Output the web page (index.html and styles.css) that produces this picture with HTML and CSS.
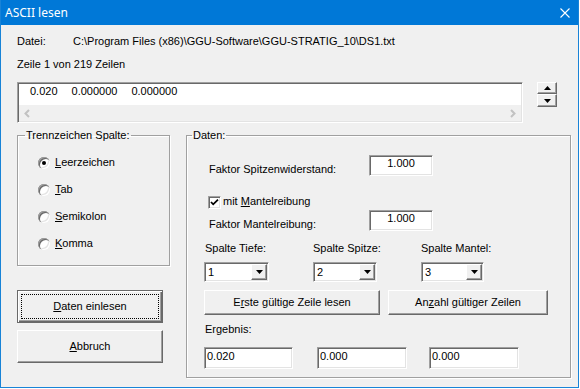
FILE: index.html
```html
<!DOCTYPE html>
<html lang="de">
<head>
  <meta charset="UTF-8">
  <title>ASCII lesen</title>
  <link rel="stylesheet" href="styles.css">
</head>
<body>
  <div class="window">
    <div class="titlebar">
      <span class="title">ASCII lesen</span>
      <svg class="close" width="10" height="10" viewBox="0 0 10 10">
        <path d="M0.5 0.5 L9.5 9.5 M9.5 0.5 L0.5 9.5" stroke="#fff" stroke-width="1.1" fill="none"/>
      </svg>
    </div>

    <div class="client">
      <div class="file-row">
        <span class="file-label">Datei:</span>
        <span>C:\Program Files (x86)\GGU-Software\GGU-STRATIG_10\DS1.txt</span>
      </div>
      <div class="line-info">Zeile 1 von 219 Zeilen</div>

      <div class="preview">
        <div class="listbox">
          <div class="list-line">
            <span>0.020</span>
            <span>0.000000</span>
            <span>0.000000</span>
          </div>
          <div class="hscroll">
            <span class="arrow-cell">
              <svg width="17" height="17" viewBox="0 0 17 17"><polyline points="10,5 6.5,8.5 10,12" fill="none" stroke="#c2c2c2" stroke-width="2"/></svg>
            </span>
            <span class="arrow-cell">
              <svg width="17" height="17" viewBox="0 0 17 17"><polyline points="7,5 10.5,8.5 7,12" fill="none" stroke="#c2c2c2" stroke-width="2"/></svg>
            </span>
          </div>
        </div>
        <div class="spin">
          <button class="raised spin-btn spin-up" type="button">
            <svg width="7" height="4" viewBox="0 0 7 4"><polygon points="0,4 7,4 3.5,0" fill="#000"/></svg>
          </button>
          <button class="raised spin-btn spin-down" type="button">
            <svg width="7" height="4" viewBox="0 0 7 4"><polygon points="0,0 7,0 3.5,4" fill="#000"/></svg>
          </button>
        </div>
      </div>

      <div class="lower">
        <div class="left-col">
          <fieldset class="group sep-group">
            <legend>Trennzeichen Spalte:</legend>
            <div class="radio-row"><span class="radio checked"></span><span class="opt-label"><u>L</u>eerzeichen</span></div>
            <div class="radio-row"><span class="radio"></span><span class="opt-label"><u>T</u>ab</span></div>
            <div class="radio-row"><span class="radio"></span><span class="opt-label"><u>S</u>emikolon</span></div>
            <div class="radio-row"><span class="radio"></span><span class="opt-label"><u>K</u>omma</span></div>
          </fieldset>

          <button class="big-btn btn-default" type="button">
            <span class="focus"><span><u>D</u>aten einlesen</span></span>
          </button>
          <button class="big-btn raised btn-cancel" type="button"><span><u>A</u>bbruch</span></button>
        </div>

        <fieldset class="group data-group">
          <legend>Daten:</legend>

          <div class="factor-row">
            <span class="factor-label">Faktor Spitzenwiderstand:</span>
            <span class="edit factor-edit">1.000</span>
          </div>

          <div class="check-row">
            <span class="check">
              <svg width="9" height="9" viewBox="0 0 9 9"><polyline points="1,4 3.2,6.3 8,1.6" fill="none" stroke="#000" stroke-width="1.8"/></svg>
            </span>
            <span class="check-label">mit <u>M</u>antelreibung</span>
          </div>

          <div class="factor-row factor-row-2">
            <span class="factor-label">Faktor Mantelreibung:</span>
            <span class="edit factor-edit">1.000</span>
          </div>

          <div class="col-grid">
            <span class="col-label first">Spalte Tiefe:</span>
            <span class="col-label">Spalte Spitze:</span>
            <span class="col-label">Spalte Mantel:</span>
            <div class="combo combo-a">
              <span class="combo-value">1</span>
              <span class="raised combo-btn"><svg width="7" height="4" viewBox="0 0 7 4"><polygon points="0,0 7,0 3.5,4" fill="#000"/></svg></span>
            </div>
            <div class="combo combo-b">
              <span class="combo-value">2</span>
              <span class="raised combo-btn"><svg width="7" height="4" viewBox="0 0 7 4"><polygon points="0,0 7,0 3.5,4" fill="#000"/></svg></span>
            </div>
            <div class="combo combo-c">
              <span class="combo-value">3</span>
              <span class="raised combo-btn"><svg width="7" height="4" viewBox="0 0 7 4"><polygon points="0,0 7,0 3.5,4" fill="#000"/></svg></span>
            </div>
          </div>

          <div class="action-row">
            <button class="raised action-btn first-line" type="button">E<u>r</u>ste gültige Zeile lesen</button>
            <button class="raised action-btn count-lines" type="button">An<u>z</u>ahl gültiger Zeilen</button>
          </div>

          <div class="result-label">Ergebnis:</div>
          <div class="result-row">
            <span class="edit result r1">0.020</span>
            <span class="edit result r2">0.000</span>
            <span class="edit result r3">0.000</span>
          </div>
        </fieldset>
      </div>
    </div>
  </div>
</body>
</html>
```

FILE: styles.css
```css
body {
  margin: 0;
  background-color: #ffffff;
  font-family: "Liberation Sans", Arial, sans-serif;
  font-size: 11px;
  line-height: 13px;
  color: #000;
}
u {
  text-decoration: underline;
  text-underline-offset: 1px;
}
button {
  font: inherit;
  color: #000;
  padding: 0;
  margin: 0;
  cursor: pointer;
}
.window {
  width: 579px;
  height: 388px;
  box-sizing: border-box;
  border: 1px solid #1883d7;
  border-top: 0;
  background-color: #f0f0f0;
}
.titlebar {
  height: 25px;
  display: flex;
  align-items: center;
  justify-content: space-between;
  padding: 0 8px 0 4px;
  background-color: #0078d7;
  color: #fff;
  font-family: "Noto Sans", "Liberation Sans", sans-serif;
  font-size: 12px;
  line-height: 25px;
}
.client {
  padding: 10px 0 0 16px;
}
.file-row {
  display: flex;
}
.file-label {
  width: 56px;
}
.line-info {
  margin-top: 10px;
}

/* sunken / raised 3d frames */
.raised {
  box-sizing: border-box;
  border: 1px solid;
  border-color: #fff #696969 #696969 #fff;
  box-shadow: inset -1px -1px 0 #a0a0a0;
  background-color: #f0f0f0;
}
.edit {
  display: block;
  box-sizing: border-box;
  border: 1px solid;
  border-color: #a0a0a0 #fff #fff #a0a0a0;
  box-shadow: inset 1px 1px 0 #696969, inset -1px -1px 0 #e3e3e3;
  background-color: #fff;
}

/* preview list */
.preview {
  display: flex;
  align-items: flex-start;
  margin-top: 11px;
}
.listbox {
  width: 506px;
  height: 41px;
  flex-shrink: 0;
  box-sizing: border-box;
  border: 1px solid;
  border-color: #a0a0a0 #fff #fff #a0a0a0;
  box-shadow: inset 1px 1px 0 #696969, inset -1px -1px 0 #e3e3e3;
  padding: 1px;
  display: flex;
  flex-direction: column;
}
.list-line {
  height: 21px;
  box-sizing: border-box;
  padding: 1px 0 0 11px;
  background-color: #fff;
  display: flex;
  gap: 14px;
}
.hscroll {
  flex: 1;
  display: flex;
  justify-content: space-between;
  align-items: center;
  background-color: #f0f0f0;
}
.arrow-cell {
  display: flex;
  width: 17px;
  height: 16px;
  align-items: center;
  justify-content: center;
  overflow: hidden;
}
.spin {
  margin-left: 14px;
  display: flex;
  flex-direction: column;
  width: 20px;
}
.spin-btn {
  display: flex;
  align-items: center;
  justify-content: center;
  width: 20px;
}
.spin-up {
  height: 12px;
}
.spin-down {
  height: 13px;
}

/* lower part */
.lower {
  display: flex;
  align-items: flex-start;
  gap: 16px;
  margin-top: 6px;
}
.left-col {
  width: 153px;
  flex-shrink: 0;
  display: flex;
  flex-direction: column;
}
.group {
  margin: 0;
  min-width: 0;
  box-sizing: border-box;
  border: 1px solid #a0a0a0;
  box-shadow: 1px 1px 0 #fff, inset 1px 1px 0 #fff;
}
.group legend {
  padding: 0 1px;
}
.sep-group {
  padding: 14px 0 15px 20px;
  display: flex;
  flex-direction: column;
  gap: 14px;
}
.sep-group legend {
  margin-left: -13px;
}
.radio-row {
  display: flex;
  align-items: center;
  height: 13px;
}
.radio {
  width: 12px;
  height: 12px;
  box-sizing: border-box;
  border-radius: 50%;
  background-color: #fff;
  box-shadow: inset 1px 1px 0 #a0a0a0, inset 2px 2px 0 #696969, inset -1px -1px 0 #fff, inset -2px -2px 0 #e3e3e3;
  display: flex;
  align-items: center;
  justify-content: center;
}
.radio.checked::after {
  content: "";
  width: 4px;
  height: 4px;
  border-radius: 50%;
  background-color: #000;
}
.opt-label {
  margin-left: 5px;
}
.big-btn {
  width: 146px;
  height: 33px;
  display: flex;
  align-items: center;
  justify-content: center;
}
.btn-default {
  margin-top: 24px;
  padding: 3px;
  border: 1px solid #696969;
  box-shadow: inset 1px 1px 0 #fff, inset -1px -1px 0 #696969, inset -2px -2px 0 #a0a0a0;
  background-color: #f0f0f0;
}
.focus {
  flex: 1;
  align-self: stretch;
  display: flex;
  align-items: center;
  justify-content: center;
  border: 1px dotted #000;
}
.btn-cancel {
  margin-top: 7px;
}

/* Daten group */
.data-group {
  width: 385px;
  flex-shrink: 0;
  padding: 13px 0 8px 17px;
}
.data-group legend {
  margin-left: -12px;
}
.factor-row {
  display: flex;
  align-items: flex-end;
  margin-left: 5px;
}
.factor-label {
  width: 160px;
}
.factor-edit {
  width: 64px;
  height: 21px;
  padding-top: 1px;
  text-align: center;
}
.check-row {
  display: flex;
  align-items: flex-start;
  margin: 19px 0 0 4px;
}
.check {
  width: 13px;
  height: 13px;
  margin-top: 1px;
  box-sizing: border-box;
  border: 1px solid;
  border-color: #a0a0a0 #fff #fff #a0a0a0;
  box-shadow: inset 1px 1px 0 #696969, inset -1px -1px 0 #e3e3e3;
  background-color: #fff;
  display: flex;
  align-items: center;
  justify-content: center;
}
.check-label {
  margin-left: 2px;
}
.factor-row-2 {
  margin-top: 1px;
}
.col-grid {
  display: grid;
  grid-template-columns: 109px 108px auto;
  row-gap: 7px;
  margin-top: 11px;
  justify-items: start;
}
.col-label.first {
  padding-left: 1px;
}
.combo {
  height: 20px;
  box-sizing: border-box;
  border: 1px solid;
  border-color: #a0a0a0 #fff #fff #a0a0a0;
  box-shadow: inset 1px 1px 0 #696969, inset -1px -1px 0 #e3e3e3;
  background-color: #fff;
  padding: 1px;
  display: flex;
}
.combo-a { width: 65px; }
.combo-b { width: 64px; }
.combo-c { width: 63px; }
.combo-value {
  flex: 1;
  padding: 1px 0 0 2px;
  line-height: 15px;
}
.combo-btn {
  width: 16px;
  height: 16px;
  display: flex;
  align-items: center;
  justify-content: center;
}
.action-row {
  display: flex;
  gap: 8px;
  margin-top: 8px;
}
.action-btn {
  height: 25px;
}
.first-line { width: 176px; }
.count-lines { width: 160px; }
.result-label {
  margin-top: 8px;
  padding-left: 1px;
}
.result-row {
  display: flex;
  margin-top: 11px;
}
.result {
  height: 22px;
  padding: 2px 0 0 2px;
}
.r1 { width: 89px; }
.r2 { width: 90px; margin-left: 24px; }
.r3 { width: 90px; margin-left: 22px; }
```
